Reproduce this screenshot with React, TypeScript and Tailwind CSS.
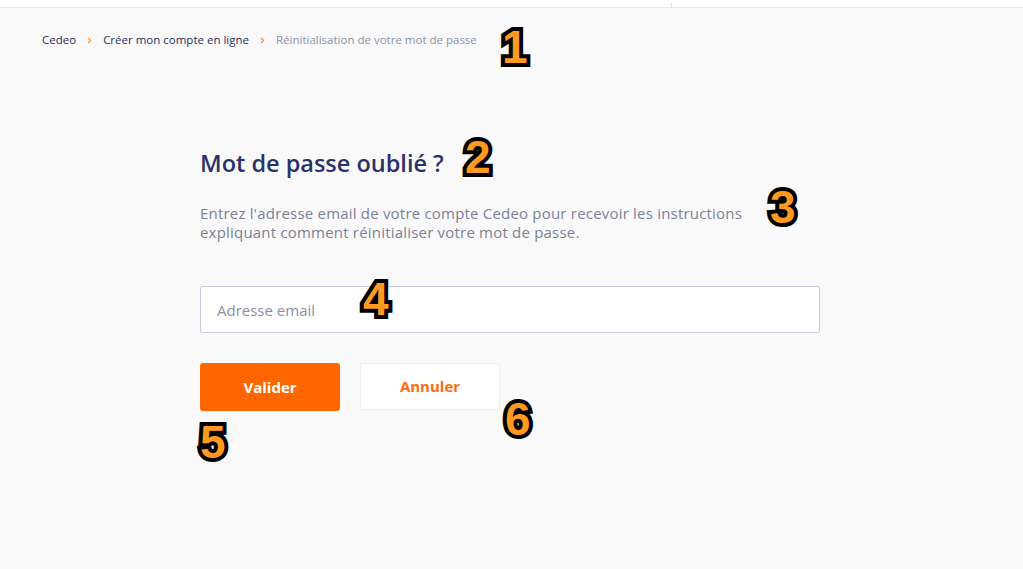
import { ChevronRight } from "lucide-react";

const crumbs = [
  { label: "Cedeo", active: true },
  { label: "Créer mon compte en ligne", active: true },
  { label: "Réinitialisation de votre mot de passe", active: false },
];

// Annotation numbers that sit over the screenshot
const marks = [
  { n: "1", cls: "left-[502px] top-[24px]" },
  { n: "2", cls: "left-[465px] top-[134px]" },
  { n: "3", cls: "left-[770px] top-[184px]" },
  { n: "4", cls: "left-[363px] top-[276px]" },
  { n: "5", cls: "left-[200px] top-[419px]" },
  { n: "6", cls: "left-[505px] top-[396px]" },
];

export default function App() {
  return (
    <div className="relative min-h-[569px] w-full bg-[#f9f9f9] font-['Open_Sans','Noto_Sans',sans-serif]">
      {/* header strip */}
      <div className="flex h-[8px] w-full border-b border-[#e8e8e8] bg-white">
        <div className="w-[671px]" />
        <div className="mt-[3px] h-[5px] w-px bg-[#e2e2e2]" />
      </div>

      {/* breadcrumb */}
      <nav className="flex items-center gap-[9px] pl-[42px] pt-[24px] text-[11.5px] leading-[16px]">
        {crumbs.map((c, i) => (
          <div key={c.label} className="flex items-center gap-[9px]">
            {i > 0 && (
              <ChevronRight className="h-[9px] w-[9px] text-[#ff8a33]" strokeWidth={3} />
            )}
            <span className={c.active ? "text-[#272f63]" : "text-[#8d91a5]"}>{c.label}</span>
          </div>
        ))}
      </nav>

      <main className="ml-[200px] w-[620px] pt-[100px]">
        <h1 className="text-[23.5px] font-semibold leading-[30px] text-[#2a3368]">
          Mot de passe oublié ?
        </h1>
        <p className="mt-[26px] w-[580px] text-[15px] leading-[19px] tracking-[0.2px] text-[#7d8196]">
          Entrez l'adresse email de votre compte Cedeo pour recevoir les instructions
          <br />
          expliquant comment réinitialiser votre mot de passe.
        </p>

        <input
          type="email"
          placeholder="Adresse email"
          className="mt-[44px] h-[47px] w-full rounded-[3px] border border-[#c6c9d7] bg-white px-[16px] text-[15px] text-[#2a3368] outline-none placeholder:text-[#8b8fa3]"
        />

        <div className="mt-[30px] flex gap-[20px]">
          <button className="h-[48px] w-[140px] rounded-[3px] bg-[#ff6600] text-[15px] font-bold text-white">
            Valider
          </button>
          <button className="h-[47px] w-[140px] rounded-[3px] border border-[#eceef3] bg-white text-[15px] font-bold text-[#ff6a0d]">
            Annuler
          </button>
        </div>
      </main>

      {marks.map((m) => (
        <span
          key={m.n}
          className={`absolute ${m.cls} font-['Liberation_Sans',sans-serif] text-[46px] font-bold leading-none text-[#ff9a1f] [-webkit-text-stroke:8px_#000] [paint-order:stroke_fill]`}
        >
          {m.n}
        </span>
      ))}
    </div>
  );
}
